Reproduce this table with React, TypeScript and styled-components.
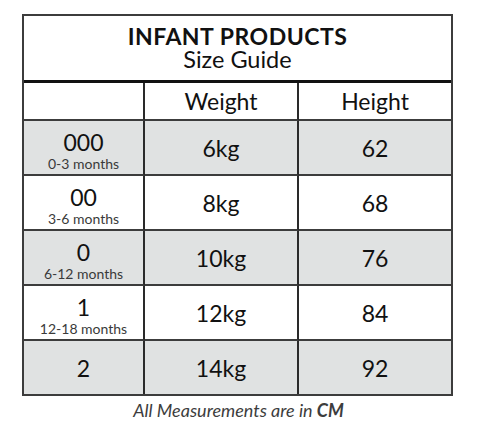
import React from "react";
import styled, { createGlobalStyle } from "styled-components";

const Global = createGlobalStyle`
  html, body { margin: 0; padding: 0; background: #ffffff; }
  body { font-family: Lato, "Noto Sans", sans-serif; color: #111111; }
`;

const Page = styled.div`
  padding: 14px 0 0 22px;
  width: 431px;
`;

const Table = styled.div`
  border: 2px solid #3c3c3c;
  background: #ffffff;
`;

const TitleBlock = styled.div`
  height: 67px;
  border-bottom: 3px solid #111111;
  display: flex;
  flex-direction: column;
  align-items: center;
  justify-content: center;
  box-sizing: border-box;
  padding-bottom: 1px;
`;

const Title = styled.div`
  font-weight: 700;
  font-size: 23px;
  line-height: 23px;
  letter-spacing: 0.5px;
`;

const Subtitle = styled.div`
  font-weight: 400;
  font-size: 23.5px;
  line-height: 23px;
`;

const Grid = styled.div`
  display: grid;
  grid-template-columns: 121px 154px 1fr;
`;

const Cell = styled.div<{ $shade?: boolean; $last?: boolean; $bottom?: boolean; $h: number; $stack?: boolean }>`
  height: ${(p) => p.$h}px;
  box-sizing: border-box;
  background: ${(p) => (p.$shade ? "#e0e2e2" : "#ffffff")};
  border-right: ${(p) => (p.$last ? "none" : "2px solid #2a2a2a")};
  border-bottom: ${(p) => (p.$bottom ? "none" : "2px solid #3c3c3c")};
  display: flex;
  flex-direction: column;
  align-items: center;
  justify-content: center;
  padding-top: ${(p) => (p.$stack ? "6px" : "0")};
  font-size: 23px;
  line-height: 26px;
`;

const Size = styled.div`
  font-size: 23px;
  line-height: 24px;
`;

const Age = styled.div`
  font-size: 14px;
  line-height: 17px;
  margin-top: 1px;
  color: #3a3a3a;
`;

const Footer = styled.div`
  text-align: center;
  font-style: italic;
  font-size: 18px;
  line-height: 20px;
  color: #3d3d3d;
  margin-top: 4px;
  padding-left: 2px;
`;

const Strong = styled.span`
  font-weight: 700;
`;

const rows = [
  { size: "000", age: "0-3 months", w: "6kg", h: "62" },
  { size: "00", age: "3-6 months", w: "8kg", h: "68" },
  { size: "0", age: "6-12 months", w: "10kg", h: "76" },
  { size: "1", age: "12-18 months", w: "12kg", h: "84" },
  { size: "2", age: "", w: "14kg", h: "92" },
];

export default function App() {
  return (
    <>
      <Global />
      <Page>
        <Table>
          <TitleBlock>
            <Title>INFANT PRODUCTS</Title>
            <Subtitle>Size Guide</Subtitle>
          </TitleBlock>
          <Grid>
            <Cell $h={38} />
            <Cell $h={38}>Weight</Cell>
            <Cell $h={38} $last>Height</Cell>
            {rows.map((r, i) => {
              const shade = i % 2 === 0;
              const bottom = i === rows.length - 1;
              const h = bottom ? 53 : 55;
              return (
                <React.Fragment key={r.size}>
                  <Cell $shade={shade} $bottom={bottom} $h={h} $stack={!!r.age}>
                    <Size>{r.size}</Size>
                    {r.age && <Age>{r.age}</Age>}
                  </Cell>
                  <Cell $shade={shade} $bottom={bottom} $h={h}>{r.w}</Cell>
                  <Cell $shade={shade} $bottom={bottom} $last $h={h}>{r.h}</Cell>
                </React.Fragment>
              );
            })}
          </Grid>
        </Table>
        <Footer>
          All Measurements are in <Strong>CM</Strong>
        </Footer>
      </Page>
    </>
  );
}
